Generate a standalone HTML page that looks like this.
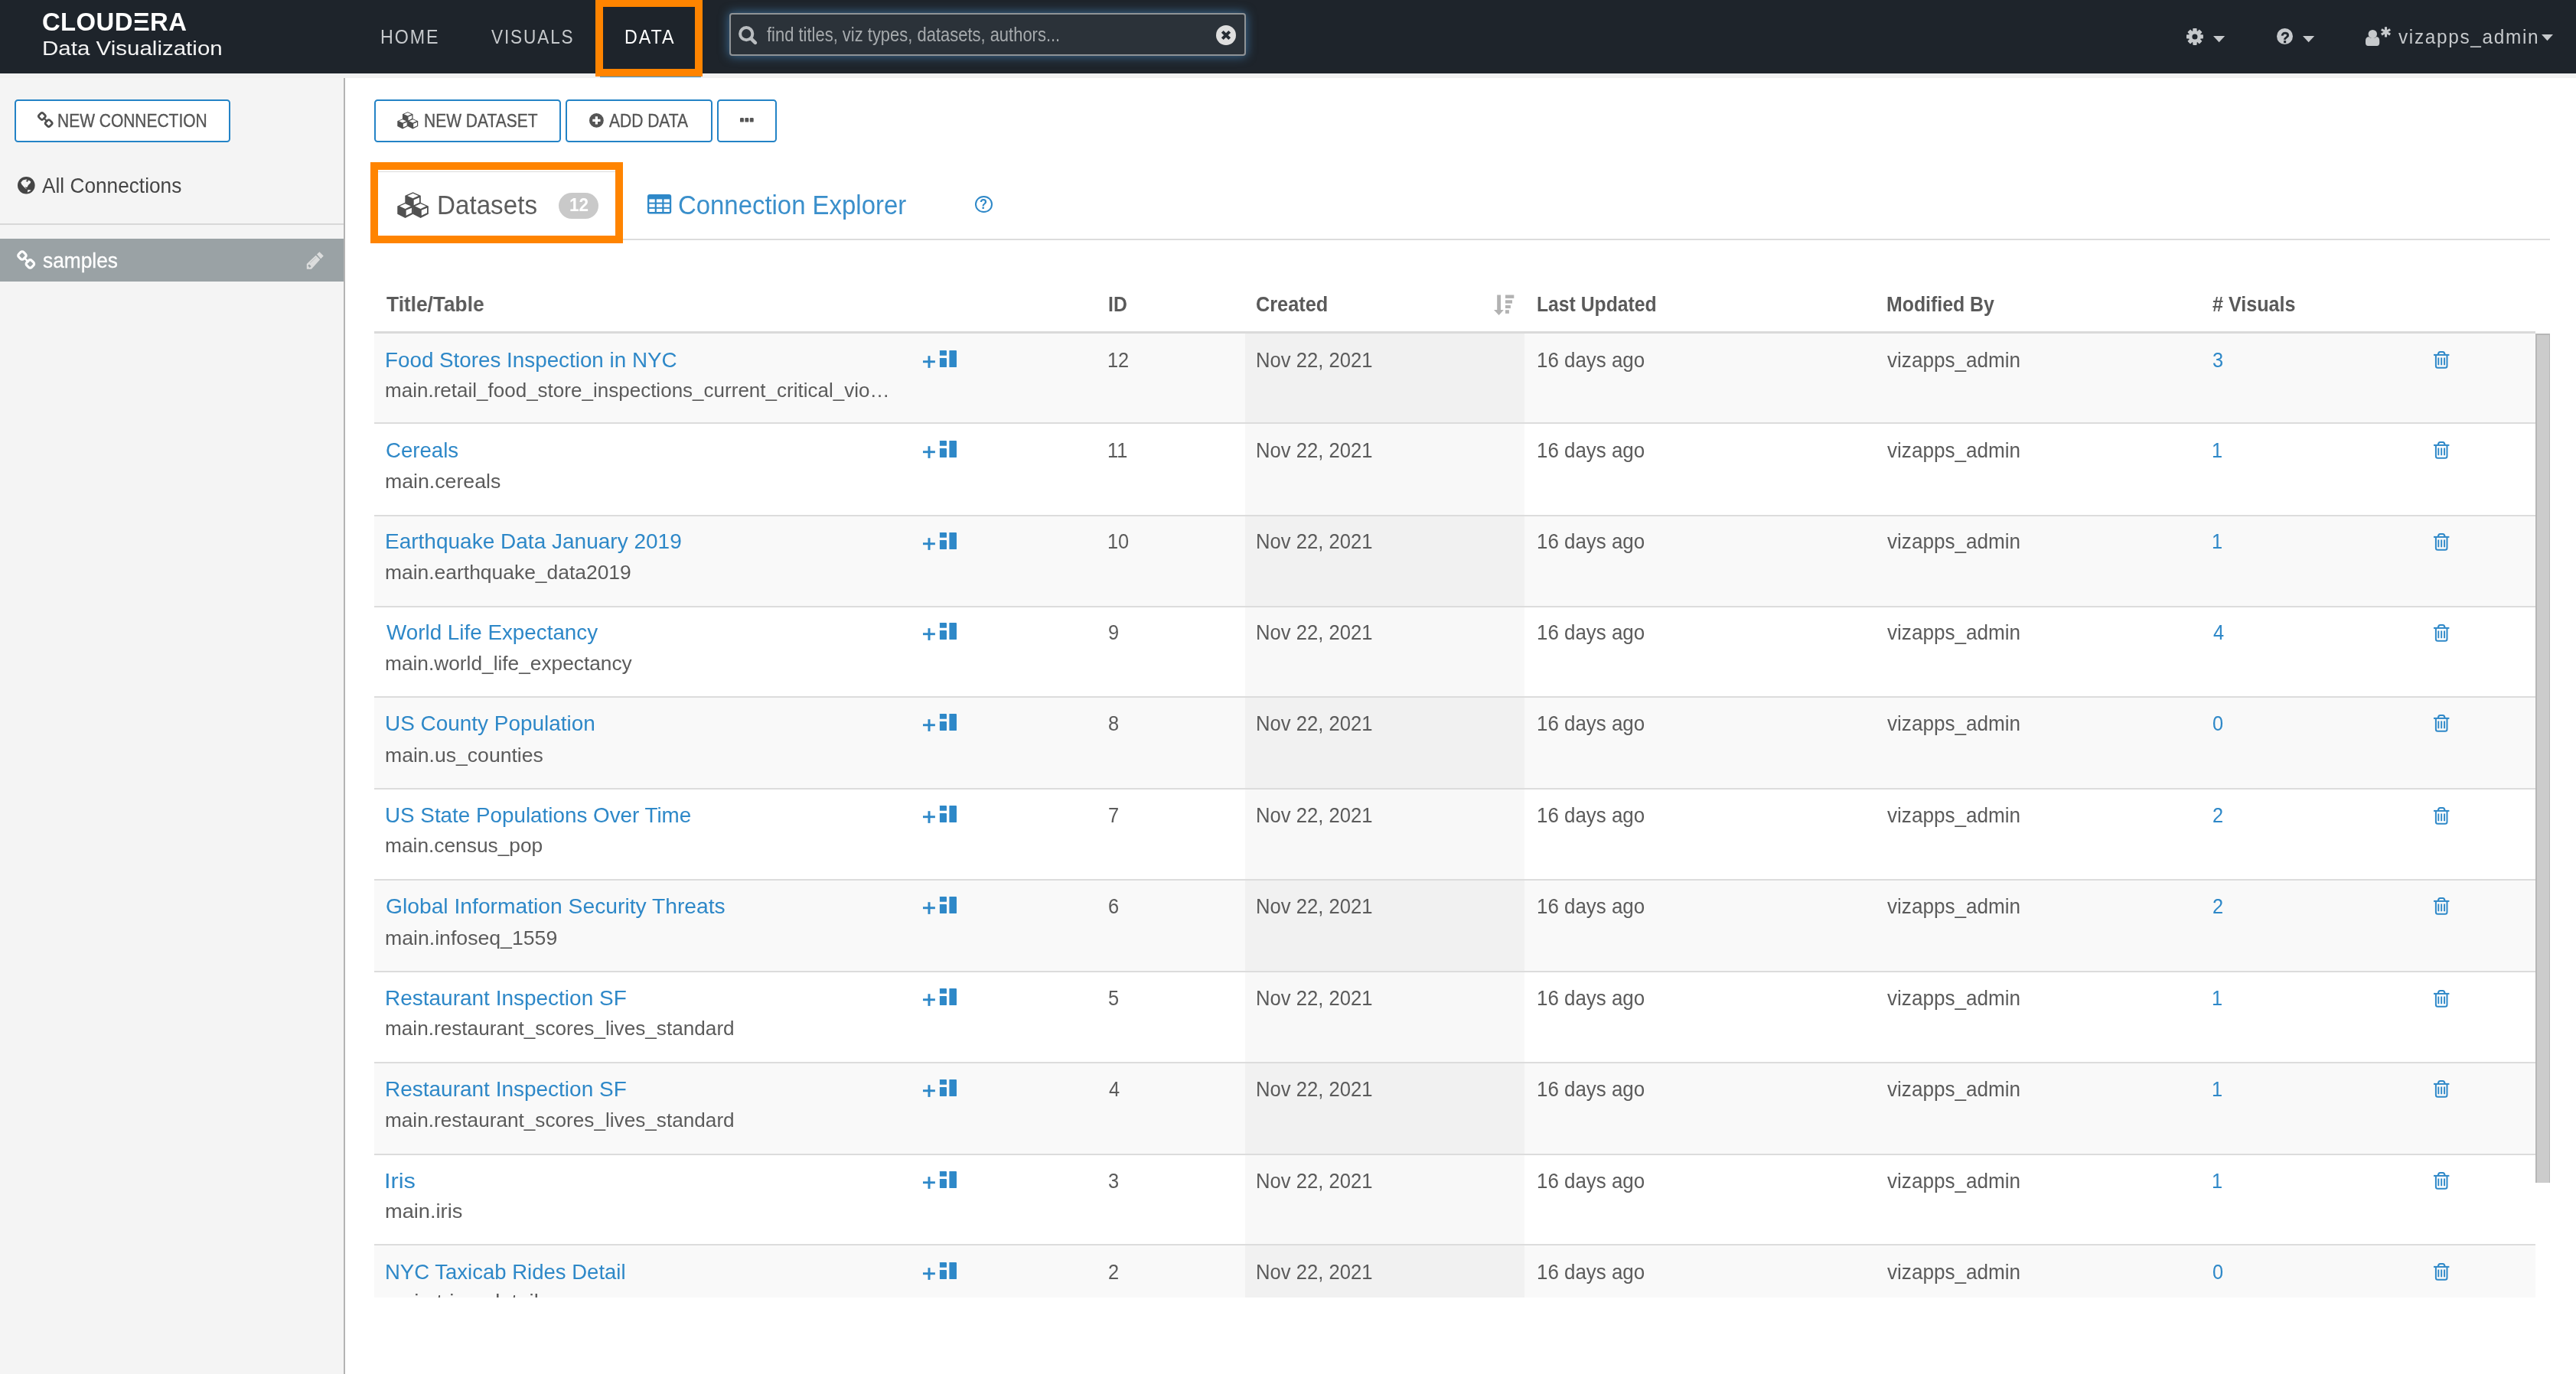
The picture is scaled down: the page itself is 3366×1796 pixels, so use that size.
<!DOCTYPE html>
<html lang="en">
<head>
<meta charset="utf-8">
<title>Cloudera Data Visualization - Data</title>
<style>
html,body{margin:0;padding:0}
body{position:relative;width:3366px;height:1796px;overflow:hidden;background:#fff;font-family:"Liberation Sans", sans-serif;color:#555555}
#page{position:absolute;left:0;top:0;width:3366px;height:1796px;overflow:hidden;will-change:transform}
.abs,.t,.i{position:absolute}
.t{white-space:nowrap;line-height:1;transform-origin:0 0;display:block}
.i{display:block;overflow:visible}
.hl{box-sizing:border-box;border:10px solid #ff8400}
.btn{box-sizing:border-box;border:2px solid #2383c6;border-radius:4.5px;background:#fff}
.search{box-sizing:border-box;border:2px solid #8f9396;border-radius:4px;background:#2b3239;box-shadow:0 0 13px 1px rgba(82,160,224,.55)}
.strip{left:0;top:95.5px;width:3366px;height:6.2px;background:#f1f1f1}
.tbody{position:absolute;overflow:hidden}
.row{position:absolute;left:0;width:100%;box-sizing:border-box;border-top:2px solid #dcdcdc}
.row.odd{background:#f9f9f9}
.row.even{background:#fff}
.sorted{position:absolute;left:1137.7px;top:0;width:365.8px;height:100%}
.row.odd .sorted{background:#f1f1f1}
.row.even .sorted{background:#f8f8f8}
</style>
</head>
<body>
<div id="page">
<div class="abs strip"></div>
<aside class="sidebar">
<div class="abs" style="left:0;top:101.6px;width:449.25px;height:1695px;background:#f4f4f4"></div>
<div class="abs" style="left:449.25px;top:101.6px;width:2px;height:1695px;background:#b3b3b3"></div>
<div class="abs btn" style="left:19px;top:130px;width:281.75px;height:55.75px"></div>
<svg class="i" style="left:49.1px;top:146.3px" width="20.6" height="21.11" viewBox="0 0 24.4 25"><g fill="none" stroke="#4f4f4f" stroke-width="3.2"><rect x="-4.5" y="-4.5" width="9" height="9" rx="2.8" transform="translate(6.95 7) rotate(45)"/><rect x="-4.5" y="-4.5" width="9" height="9" rx="2.8" transform="translate(17.4 17.9) rotate(45)"/></g><path d="M9 9.3l6.6 6.5" stroke="#4f4f4f" stroke-width="2.5" stroke-linecap="butt"/></svg>
<span class="t" style="left:75.29px;top:146.73px;font-size:23px;transform:scaleX(0.9116);-webkit-text-stroke:0.35px currentColor;">NEW CONNECTION</span>
<svg class="i" style="left:22.6px;top:231.2px" width="22.6" height="22.6" viewBox="0 0 22.6 22.6"><circle cx="11.3" cy="11.3" r="11.3" fill="#454545"/><path d="M4.3 7.4L6.9 4.6L11 3.4L12.9 3.9L10.7 5.4L12.9 6.9L13.8 5.2L14.7 4.6L17.3 6.4L16.5 8.5L13.9 11L12.7 13.4L11.6 14L10.1 13L10.4 14.5L12.3 16.2L10.6 15.5L7.4 12.5L5.1 9.7z" fill="#f4f4f4"/><path d="M13.4 17.1L17.5 17.4L16.3 18.8L12.8 20.6z" fill="#f4f4f4"/></svg>
<span class="t" style="left:55.3px;top:228.97px;font-size:27.2px;color:#454545;transform:scaleX(0.9649);">All Connections</span>
<div class="abs" style="left:0;top:292px;width:449.25px;height:1.5px;background:#d8d8d8"></div>
<div class="abs" style="left:0;top:312px;width:449.25px;height:56.25px;background:#9aa2a5"></div>
<svg class="i" style="left:21.6px;top:327.1px" width="24.4" height="25" viewBox="0 0 24.4 25"><g fill="none" stroke="#ffffff" stroke-width="3.2"><rect x="-4.5" y="-4.5" width="9" height="9" rx="2.8" transform="translate(6.95 7) rotate(45)"/><rect x="-4.5" y="-4.5" width="9" height="9" rx="2.8" transform="translate(17.4 17.9) rotate(45)"/></g><path d="M9 9.3l6.6 6.5" stroke="#ffffff" stroke-width="2.5" stroke-linecap="butt"/></svg>
<span class="t" style="left:55.8px;top:326.87px;font-size:27.2px;color:#fff;transform:scaleX(0.9678);-webkit-text-stroke:0.3px #fff;">samples</span>
<svg class="i" style="left:400px;top:329px" width="23" height="23" viewBox="0 0 23 23"><g fill="#dcdddd" stroke="#dcdddd" stroke-width="0.8" stroke-linejoin="round"><path d="M14.4 3.4L17.4 0.7L22.3 5.5L19.2 8.9z"/></g><path d="M0.8 16L12.7 4.7L18.2 10.2L6.9 22.7H0.8z" fill="#dcdddd"/><path d="M2.6 18L4 16.4L6.6 19L5 20.7L3.8 20.5L3.7 19.3L2.6 19.2z" fill="#9aa2a5"/><path d="M5.2 14.6L13.2 7.4" stroke="#9aa2a5" stroke-width="0.7" opacity="0.65"/></svg>
</aside>
<main>
<section class="toolbar">
<div class="abs btn" style="left:489.25px;top:130px;width:243.75px;height:55.75px"></div>
<svg class="i" style="left:518.8px;top:146.3px" width="27.5" height="22.6" viewBox="0 0 41 34.2"><path d="M20.5 0.2l10.3 4.7v10.3l-10.3 5.2l-10.3-5.2v-10.3z" fill="#505050"/><path d="M20.5 1.75l7.3 3.25l-7.3 3.35l-7.3-3.35z" fill="#fff"/><path d="M21.65 10.3l7.3-3.1v6.6l-7.3 3.55z" fill="#fff"/><path d="M10.4 13.9l10.3 4.7v10.3l-10.3 5.2l-10.3-5.2v-10.3z" fill="#505050"/><path d="M10.4 15.45l7.3 3.25l-7.3 3.35l-7.3-3.35z" fill="#fff"/><path d="M11.55 24l7.3-3.1v6.6l-7.3 3.55z" fill="#fff"/><path d="M30.6 13.9l10.3 4.7v10.3l-10.3 5.2l-10.3-5.2v-10.3z" fill="#505050"/><path d="M30.6 15.45l7.3 3.25l-7.3 3.35l-7.3-3.35z" fill="#fff"/><path d="M31.75 24l7.3-3.1v6.6l-7.3 3.55z" fill="#fff"/></svg>
<span class="t" style="left:553.59px;top:146.73px;font-size:23px;transform:scaleX(0.9124);-webkit-text-stroke:0.35px currentColor;">NEW DATASET</span>
<div class="abs btn" style="left:739.25px;top:130px;width:191.25px;height:55.75px"></div>
<svg class="i" style="left:770.2px;top:148.2px" width="18.8" height="18.8" viewBox="0 0 18.8 18.8"><circle cx="9.4" cy="9.4" r="9.4" fill="#555555"/><path d="M9.4 4.3v10.2M4.3 9.4h10.2" stroke="#fff" stroke-width="3.2"/></svg>
<span class="t" style="left:795.8px;top:146.73px;font-size:23px;transform:scaleX(0.9134);-webkit-text-stroke:0.35px currentColor;">ADD DATA</span>
<div class="abs btn" style="left:936.5px;top:130px;width:78.75px;height:55.75px"></div>
<svg class="i" style="left:966.8px;top:153.8px" width="17.7" height="5.6" viewBox="0 0 17.7 5.6"><rect x="0" y="0" width="4.9" height="5.6" rx="1.2" fill="#555555"/><rect x="6.4" y="0" width="4.9" height="5.6" rx="1.2" fill="#555555"/><rect x="12.8" y="0" width="4.9" height="5.6" rx="1.2" fill="#555555"/></svg>
</section>
<section class="tabs">
<div class="abs" style="left:489px;top:312.2px;width:2843px;height:1.8px;background:#dcdcdc"></div>
<div class="abs" style="left:490px;top:223.6px;width:320px;height:90.5px;background:#fff;border:1.8px solid #dcdcdc;border-bottom:none;border-radius:4px 4px 0 0"></div>
<div class="abs hl" style="left:484px;top:212px;width:329.75px;height:105.5px"></div>
<svg class="i" style="left:518.9px;top:251px" width="41.1" height="34" viewBox="0 0 41 34.2"><path d="M20.5 0.2l10.3 4.7v10.3l-10.3 5.2l-10.3-5.2v-10.3z" fill="#515151"/><path d="M20.5 1.75l7.3 3.25l-7.3 3.35l-7.3-3.35z" fill="#fff"/><path d="M21.65 10.3l7.3-3.1v6.6l-7.3 3.55z" fill="#fff"/><path d="M10.4 13.9l10.3 4.7v10.3l-10.3 5.2l-10.3-5.2v-10.3z" fill="#515151"/><path d="M10.4 15.45l7.3 3.25l-7.3 3.35l-7.3-3.35z" fill="#fff"/><path d="M11.55 24l7.3-3.1v6.6l-7.3 3.55z" fill="#fff"/><path d="M30.6 13.9l10.3 4.7v10.3l-10.3 5.2l-10.3-5.2v-10.3z" fill="#515151"/><path d="M30.6 15.45l7.3 3.25l-7.3 3.35l-7.3-3.35z" fill="#fff"/><path d="M31.75 24l7.3-3.1v6.6l-7.3 3.55z" fill="#fff"/></svg>
<span class="t" style="left:571.26px;top:251.04px;font-size:34.2px;color:#5c5c5c;transform:scaleX(0.971);">Datasets</span>
<div class="abs" style="left:729.6px;top:252px;width:52.4px;height:33.7px;border-radius:17px;background:#c9c9c9"></div>
<span class="t" style="left:743.68px;top:256.34px;font-size:24.4px;font-weight:700;color:#fff;transform:scaleX(0.9231);">12</span>
<svg class="i" style="left:846px;top:254px" width="31.2" height="25.5" viewBox="0 0 31.2 25.5"><rect x="0" y="0" width="31.2" height="25.5" rx="3" fill="#2e88c8"/><rect x="2.3" y="6.4" width="7.4" height="4.2" fill="#fff"/><rect x="2.3" y="12.6" width="7.4" height="4.2" fill="#fff"/><rect x="2.3" y="18.8" width="7.4" height="4.2" fill="#fff"/><rect x="11.9" y="6.4" width="7.4" height="4.2" fill="#fff"/><rect x="11.9" y="12.6" width="7.4" height="4.2" fill="#fff"/><rect x="11.9" y="18.8" width="7.4" height="4.2" fill="#fff"/><rect x="21.5" y="6.4" width="7.4" height="4.2" fill="#fff"/><rect x="21.5" y="12.6" width="7.4" height="4.2" fill="#fff"/><rect x="21.5" y="18.8" width="7.4" height="4.2" fill="#fff"/></svg>
<span class="t" style="left:886.24px;top:250.64px;font-size:34.2px;color:#3a8fcb;transform:scaleX(0.9625);">Connection Explorer</span>
<div class="abs" style="left:1274px;top:256.1px;width:22.6px;height:21.6px;border-radius:50%;border:2.2px solid #2e88c8;box-sizing:border-box"></div>
<span class="t" style="left:1280.4px;top:257.94px;font-size:18.5px;font-weight:700;color:#2e88c8;transform:scaleX(0.8909);">?</span>
</section>
<section class="datasets">
<div class="thead">
<span class="t" style="left:504.6px;top:385.31px;font-size:26.8px;font-weight:700;color:#5a5a5a;transform:scaleX(0.9803);">Title/Table</span>
<span class="t" style="left:1447.98px;top:385.31px;font-size:26.8px;font-weight:700;color:#5a5a5a;transform:scaleX(0.9236);">ID</span>
<span class="t" style="left:1641.16px;top:385.31px;font-size:26.8px;font-weight:700;color:#5a5a5a;transform:scaleX(0.9444);">Created</span>
<svg class="i" style="left:1952px;top:385px" width="27" height="28" viewBox="0 0 27 28"><g fill="#b2b2b2"><path d="M4.2 0.5h4.8v19.4h3.9l-6.3 7.2-6.6-7.2h4.2z"/><rect x="15" y="0.5" width="11.3" height="4.4"/><rect x="15" y="7.3" width="9" height="4.3"/><rect x="15" y="13.9" width="6.9" height="4.1"/><rect x="15" y="20.2" width="4.9" height="4.6"/></g></svg>
<span class="t" style="left:2008.48px;top:385.31px;font-size:26.8px;font-weight:700;color:#5a5a5a;transform:scaleX(0.9225);">Last Updated</span>
<span class="t" style="left:2465.37px;top:385.31px;font-size:26.8px;font-weight:700;color:#5a5a5a;transform:scaleX(0.9275);">Modified By</span>
<span class="t" style="left:2891.3px;top:385.31px;font-size:26.8px;font-weight:700;color:#5a5a5a;transform:scaleX(0.9381);"># Visuals</span>
<div class="abs" style="left:489px;top:433px;width:2824.3px;height:3px;background:#dadada"></div>
</div>
<div class="tbody" style="left:489px;top:436px;width:2824.3px;height:1259.6px">
<div class="row odd" style="top:-3px;height:119px">
<div class="sorted"></div>
<span class="t" style="left:13.56px;top:21.59px;font-size:27.3px;color:#2e88c8;transform:scaleX(1.0182);">Food Stores Inspection in NYC</span>
<span class="t" style="left:14.38px;top:62.59px;font-size:25.4px;color:#5b5b5b;transform:scaleX(1.0248);">main.retail_food_store_inspections_current_critical_vio…</span>
<svg class="i" style="left:717.2px;top:22.7px" width="45" height="23.2" viewBox="0 0 45 23.2"><g fill="#2e88c8"><rect x="0" y="13.3" width="15.9" height="2.9"/><rect x="6.5" y="7.2" width="3" height="15.7"/><rect x="21.9" y="0" width="9.1" height="6.8" rx="0.5"/><rect x="21.9" y="9.9" width="9.1" height="12.1" rx="0.5"/><rect x="34.4" y="0" width="9.6" height="22" rx="0.5"/></g></svg>
<span class="t" style="left:958.44px;top:21.59px;font-size:27.3px;color:#5b5b5b;transform:scaleX(0.93);">12</span>
<span class="t" style="left:1151.72px;top:21.59px;font-size:27.3px;color:#5b5b5b;transform:scaleX(0.9384);">Nov 22, 2021</span>
<span class="t" style="left:1519.3px;top:21.59px;font-size:27.3px;color:#5b5b5b;transform:scaleX(0.9492);">16 days ago</span>
<span class="t" style="left:1976.8px;top:21.59px;font-size:27.3px;color:#5b5b5b;transform:scaleX(0.9563);">vizapps_admin</span>
<span class="t" style="left:2401.57px;top:21.59px;font-size:27.3px;color:#2e88c8;transform:scaleX(0.93);">3</span>
<svg class="i" style="left:2690.9px;top:24px" width="20.4" height="22.8" viewBox="0 0 20.4 22.8"><g fill="none" stroke="#2e88c8" stroke-width="2"><path d="M0 4.9h20.4"/><path d="M5.8 4.4c.300-2.3 1.2-3.4 2.7-3.4h3.4c1.5 0 2.4 1.1 2.7 3.4"/><path d="M2.9 5.2v14.1c0 1.5 1 2.5 2.5 2.5h9.6c1.5 0 2.5-1 2.5-2.5V5.2"/><path d="M6.3 8.4v9.8M10.2 8.4v9.8M14.1 8.4v9.8" stroke-width="1.9"/></g></svg>
</div>
<div class="row even" style="top:116px;height:121px">
<div class="sorted"></div>
<span class="t" style="left:14.59px;top:20.69px;font-size:27.3px;color:#2e88c8;transform:scaleX(1.0118);">Cereals</span>
<span class="t" style="left:14.35px;top:63.49px;font-size:25.4px;color:#5b5b5b;transform:scaleX(1.051);">main.cereals</span>
<svg class="i" style="left:717.2px;top:21.8px" width="45" height="23.2" viewBox="0 0 45 23.2"><g fill="#2e88c8"><rect x="0" y="13.3" width="15.9" height="2.9"/><rect x="6.5" y="7.2" width="3" height="15.7"/><rect x="21.9" y="0" width="9.1" height="6.8" rx="0.5"/><rect x="21.9" y="9.9" width="9.1" height="12.1" rx="0.5"/><rect x="34.4" y="0" width="9.6" height="22" rx="0.5"/></g></svg>
<span class="t" style="left:958.44px;top:20.69px;font-size:27.3px;color:#5b5b5b;transform:scaleX(0.93);">11</span>
<span class="t" style="left:1151.72px;top:20.69px;font-size:27.3px;color:#5b5b5b;transform:scaleX(0.9384);">Nov 22, 2021</span>
<span class="t" style="left:1519.3px;top:20.69px;font-size:27.3px;color:#5b5b5b;transform:scaleX(0.9492);">16 days ago</span>
<span class="t" style="left:1976.8px;top:20.69px;font-size:27.3px;color:#5b5b5b;transform:scaleX(0.9563);">vizapps_admin</span>
<span class="t" style="left:2400.64px;top:20.69px;font-size:27.3px;color:#2e88c8;transform:scaleX(0.93);">1</span>
<svg class="i" style="left:2690.9px;top:23.1px" width="20.4" height="22.8" viewBox="0 0 20.4 22.8"><g fill="none" stroke="#2e88c8" stroke-width="2"><path d="M0 4.9h20.4"/><path d="M5.8 4.4c.300-2.3 1.2-3.4 2.7-3.4h3.4c1.5 0 2.4 1.1 2.7 3.4"/><path d="M2.9 5.2v14.1c0 1.5 1 2.5 2.5 2.5h9.6c1.5 0 2.5-1 2.5-2.5V5.2"/><path d="M6.3 8.4v9.8M10.2 8.4v9.8M14.1 8.4v9.8" stroke-width="1.9"/></g></svg>
</div>
<div class="row odd" style="top:237px;height:119px">
<div class="sorted"></div>
<span class="t" style="left:13.55px;top:19.49px;font-size:27.3px;color:#2e88c8;transform:scaleX(1.0262);">Earthquake Data January 2019</span>
<span class="t" style="left:14.36px;top:60.99px;font-size:25.4px;color:#5b5b5b;transform:scaleX(1.0406);">main.earthquake_data2019</span>
<svg class="i" style="left:717.2px;top:20.6px" width="45" height="23.2" viewBox="0 0 45 23.2"><g fill="#2e88c8"><rect x="0" y="13.3" width="15.9" height="2.9"/><rect x="6.5" y="7.2" width="3" height="15.7"/><rect x="21.9" y="0" width="9.1" height="6.8" rx="0.5"/><rect x="21.9" y="9.9" width="9.1" height="12.1" rx="0.5"/><rect x="34.4" y="0" width="9.6" height="22" rx="0.5"/></g></svg>
<span class="t" style="left:958.44px;top:19.49px;font-size:27.3px;color:#5b5b5b;transform:scaleX(0.93);">10</span>
<span class="t" style="left:1151.72px;top:19.49px;font-size:27.3px;color:#5b5b5b;transform:scaleX(0.9384);">Nov 22, 2021</span>
<span class="t" style="left:1519.3px;top:19.49px;font-size:27.3px;color:#5b5b5b;transform:scaleX(0.9492);">16 days ago</span>
<span class="t" style="left:1976.8px;top:19.49px;font-size:27.3px;color:#5b5b5b;transform:scaleX(0.9563);">vizapps_admin</span>
<span class="t" style="left:2400.64px;top:19.49px;font-size:27.3px;color:#2e88c8;transform:scaleX(0.93);">1</span>
<svg class="i" style="left:2690.9px;top:21.9px" width="20.4" height="22.8" viewBox="0 0 20.4 22.8"><g fill="none" stroke="#2e88c8" stroke-width="2"><path d="M0 4.9h20.4"/><path d="M5.8 4.4c.300-2.3 1.2-3.4 2.7-3.4h3.4c1.5 0 2.4 1.1 2.7 3.4"/><path d="M2.9 5.2v14.1c0 1.5 1 2.5 2.5 2.5h9.6c1.5 0 2.5-1 2.5-2.5V5.2"/><path d="M6.3 8.4v9.8M10.2 8.4v9.8M14.1 8.4v9.8" stroke-width="1.9"/></g></svg>
</div>
<div class="row even" style="top:356px;height:118px">
<div class="sorted"></div>
<span class="t" style="left:15.6px;top:19.29px;font-size:27.3px;color:#2e88c8;transform:scaleX(1.0187);">World Life Expectancy</span>
<span class="t" style="left:14.37px;top:60.89px;font-size:25.4px;color:#5b5b5b;transform:scaleX(1.0347);">main.world_life_expectancy</span>
<svg class="i" style="left:717.2px;top:20.4px" width="45" height="23.2" viewBox="0 0 45 23.2"><g fill="#2e88c8"><rect x="0" y="13.3" width="15.9" height="2.9"/><rect x="6.5" y="7.2" width="3" height="15.7"/><rect x="21.9" y="0" width="9.1" height="6.8" rx="0.5"/><rect x="21.9" y="9.9" width="9.1" height="12.1" rx="0.5"/><rect x="34.4" y="0" width="9.6" height="22" rx="0.5"/></g></svg>
<span class="t" style="left:959.37px;top:19.29px;font-size:27.3px;color:#5b5b5b;transform:scaleX(0.93);">9</span>
<span class="t" style="left:1151.72px;top:19.29px;font-size:27.3px;color:#5b5b5b;transform:scaleX(0.9384);">Nov 22, 2021</span>
<span class="t" style="left:1519.3px;top:19.29px;font-size:27.3px;color:#5b5b5b;transform:scaleX(0.9492);">16 days ago</span>
<span class="t" style="left:1976.8px;top:19.29px;font-size:27.3px;color:#5b5b5b;transform:scaleX(0.9563);">vizapps_admin</span>
<span class="t" style="left:2402.5px;top:19.29px;font-size:27.3px;color:#2e88c8;transform:scaleX(0.93);">4</span>
<svg class="i" style="left:2690.9px;top:21.7px" width="20.4" height="22.8" viewBox="0 0 20.4 22.8"><g fill="none" stroke="#2e88c8" stroke-width="2"><path d="M0 4.9h20.4"/><path d="M5.8 4.4c.300-2.3 1.2-3.4 2.7-3.4h3.4c1.5 0 2.4 1.1 2.7 3.4"/><path d="M2.9 5.2v14.1c0 1.5 1 2.5 2.5 2.5h9.6c1.5 0 2.5-1 2.5-2.5V5.2"/><path d="M6.3 8.4v9.8M10.2 8.4v9.8M14.1 8.4v9.8" stroke-width="1.9"/></g></svg>
</div>
<div class="row odd" style="top:474px;height:120px">
<div class="sorted"></div>
<span class="t" style="left:13.55px;top:19.89px;font-size:27.3px;color:#2e88c8;transform:scaleX(1.023);">US County Population</span>
<span class="t" style="left:14.35px;top:63.19px;font-size:25.4px;color:#5b5b5b;transform:scaleX(1.0465);">main.us_counties</span>
<svg class="i" style="left:717.2px;top:21px" width="45" height="23.2" viewBox="0 0 45 23.2"><g fill="#2e88c8"><rect x="0" y="13.3" width="15.9" height="2.9"/><rect x="6.5" y="7.2" width="3" height="15.7"/><rect x="21.9" y="0" width="9.1" height="6.8" rx="0.5"/><rect x="21.9" y="9.9" width="9.1" height="12.1" rx="0.5"/><rect x="34.4" y="0" width="9.6" height="22" rx="0.5"/></g></svg>
<span class="t" style="left:959.37px;top:19.89px;font-size:27.3px;color:#5b5b5b;transform:scaleX(0.93);">8</span>
<span class="t" style="left:1151.72px;top:19.89px;font-size:27.3px;color:#5b5b5b;transform:scaleX(0.9384);">Nov 22, 2021</span>
<span class="t" style="left:1519.3px;top:19.89px;font-size:27.3px;color:#5b5b5b;transform:scaleX(0.9492);">16 days ago</span>
<span class="t" style="left:1976.8px;top:19.89px;font-size:27.3px;color:#5b5b5b;transform:scaleX(0.9563);">vizapps_admin</span>
<span class="t" style="left:2401.57px;top:19.89px;font-size:27.3px;color:#2e88c8;transform:scaleX(0.93);">0</span>
<svg class="i" style="left:2690.9px;top:22.3px" width="20.4" height="22.8" viewBox="0 0 20.4 22.8"><g fill="none" stroke="#2e88c8" stroke-width="2"><path d="M0 4.9h20.4"/><path d="M5.8 4.4c.300-2.3 1.2-3.4 2.7-3.4h3.4c1.5 0 2.4 1.1 2.7 3.4"/><path d="M2.9 5.2v14.1c0 1.5 1 2.5 2.5 2.5h9.6c1.5 0 2.5-1 2.5-2.5V5.2"/><path d="M6.3 8.4v9.8M10.2 8.4v9.8M14.1 8.4v9.8" stroke-width="1.9"/></g></svg>
</div>
<div class="row even" style="top:594px;height:119px">
<div class="sorted"></div>
<span class="t" style="left:13.56px;top:20.19px;font-size:27.3px;color:#2e88c8;transform:scaleX(1.0185);">US State Populations Over Time</span>
<span class="t" style="left:14.36px;top:61.19px;font-size:25.4px;color:#5b5b5b;transform:scaleX(1.0359);">main.census_pop</span>
<svg class="i" style="left:717.2px;top:21.3px" width="45" height="23.2" viewBox="0 0 45 23.2"><g fill="#2e88c8"><rect x="0" y="13.3" width="15.9" height="2.9"/><rect x="6.5" y="7.2" width="3" height="15.7"/><rect x="21.9" y="0" width="9.1" height="6.8" rx="0.5"/><rect x="21.9" y="9.9" width="9.1" height="12.1" rx="0.5"/><rect x="34.4" y="0" width="9.6" height="22" rx="0.5"/></g></svg>
<span class="t" style="left:959.37px;top:20.19px;font-size:27.3px;color:#5b5b5b;transform:scaleX(0.93);">7</span>
<span class="t" style="left:1151.72px;top:20.19px;font-size:27.3px;color:#5b5b5b;transform:scaleX(0.9384);">Nov 22, 2021</span>
<span class="t" style="left:1519.3px;top:20.19px;font-size:27.3px;color:#5b5b5b;transform:scaleX(0.9492);">16 days ago</span>
<span class="t" style="left:1976.8px;top:20.19px;font-size:27.3px;color:#5b5b5b;transform:scaleX(0.9563);">vizapps_admin</span>
<span class="t" style="left:2401.57px;top:20.19px;font-size:27.3px;color:#2e88c8;transform:scaleX(0.93);">2</span>
<svg class="i" style="left:2690.9px;top:22.6px" width="20.4" height="22.8" viewBox="0 0 20.4 22.8"><g fill="none" stroke="#2e88c8" stroke-width="2"><path d="M0 4.9h20.4"/><path d="M5.8 4.4c.300-2.3 1.2-3.4 2.7-3.4h3.4c1.5 0 2.4 1.1 2.7 3.4"/><path d="M2.9 5.2v14.1c0 1.5 1 2.5 2.5 2.5h9.6c1.5 0 2.5-1 2.5-2.5V5.2"/><path d="M6.3 8.4v9.8M10.2 8.4v9.8M14.1 8.4v9.8" stroke-width="1.9"/></g></svg>
</div>
<div class="row odd" style="top:713px;height:120px">
<div class="sorted"></div>
<span class="t" style="left:14.57px;top:19.79px;font-size:27.3px;color:#2e88c8;transform:scaleX(1.0346);">Global Information Security Threats</span>
<span class="t" style="left:14.35px;top:63.09px;font-size:25.4px;color:#5b5b5b;transform:scaleX(1.0497);">main.infoseq_1559</span>
<svg class="i" style="left:717.2px;top:20.9px" width="45" height="23.2" viewBox="0 0 45 23.2"><g fill="#2e88c8"><rect x="0" y="13.3" width="15.9" height="2.9"/><rect x="6.5" y="7.2" width="3" height="15.7"/><rect x="21.9" y="0" width="9.1" height="6.8" rx="0.5"/><rect x="21.9" y="9.9" width="9.1" height="12.1" rx="0.5"/><rect x="34.4" y="0" width="9.6" height="22" rx="0.5"/></g></svg>
<span class="t" style="left:959.37px;top:19.79px;font-size:27.3px;color:#5b5b5b;transform:scaleX(0.93);">6</span>
<span class="t" style="left:1151.72px;top:19.79px;font-size:27.3px;color:#5b5b5b;transform:scaleX(0.9384);">Nov 22, 2021</span>
<span class="t" style="left:1519.3px;top:19.79px;font-size:27.3px;color:#5b5b5b;transform:scaleX(0.9492);">16 days ago</span>
<span class="t" style="left:1976.8px;top:19.79px;font-size:27.3px;color:#5b5b5b;transform:scaleX(0.9563);">vizapps_admin</span>
<span class="t" style="left:2401.57px;top:19.79px;font-size:27.3px;color:#2e88c8;transform:scaleX(0.93);">2</span>
<svg class="i" style="left:2690.9px;top:22.2px" width="20.4" height="22.8" viewBox="0 0 20.4 22.8"><g fill="none" stroke="#2e88c8" stroke-width="2"><path d="M0 4.9h20.4"/><path d="M5.8 4.4c.300-2.3 1.2-3.4 2.7-3.4h3.4c1.5 0 2.4 1.1 2.7 3.4"/><path d="M2.9 5.2v14.1c0 1.5 1 2.5 2.5 2.5h9.6c1.5 0 2.5-1 2.5-2.5V5.2"/><path d="M6.3 8.4v9.8M10.2 8.4v9.8M14.1 8.4v9.8" stroke-width="1.9"/></g></svg>
</div>
<div class="row even" style="top:833px;height:119px">
<div class="sorted"></div>
<span class="t" style="left:13.55px;top:20.09px;font-size:27.3px;color:#2e88c8;transform:scaleX(1.0251);">Restaurant Inspection SF</span>
<span class="t" style="left:14.37px;top:61.19px;font-size:25.4px;color:#5b5b5b;transform:scaleX(1.0305);">main.restaurant_scores_lives_standard</span>
<svg class="i" style="left:717.2px;top:21.2px" width="45" height="23.2" viewBox="0 0 45 23.2"><g fill="#2e88c8"><rect x="0" y="13.3" width="15.9" height="2.9"/><rect x="6.5" y="7.2" width="3" height="15.7"/><rect x="21.9" y="0" width="9.1" height="6.8" rx="0.5"/><rect x="21.9" y="9.9" width="9.1" height="12.1" rx="0.5"/><rect x="34.4" y="0" width="9.6" height="22" rx="0.5"/></g></svg>
<span class="t" style="left:959.37px;top:20.09px;font-size:27.3px;color:#5b5b5b;transform:scaleX(0.93);">5</span>
<span class="t" style="left:1151.72px;top:20.09px;font-size:27.3px;color:#5b5b5b;transform:scaleX(0.9384);">Nov 22, 2021</span>
<span class="t" style="left:1519.3px;top:20.09px;font-size:27.3px;color:#5b5b5b;transform:scaleX(0.9492);">16 days ago</span>
<span class="t" style="left:1976.8px;top:20.09px;font-size:27.3px;color:#5b5b5b;transform:scaleX(0.9563);">vizapps_admin</span>
<span class="t" style="left:2400.64px;top:20.09px;font-size:27.3px;color:#2e88c8;transform:scaleX(0.93);">1</span>
<svg class="i" style="left:2690.9px;top:22.5px" width="20.4" height="22.8" viewBox="0 0 20.4 22.8"><g fill="none" stroke="#2e88c8" stroke-width="2"><path d="M0 4.9h20.4"/><path d="M5.8 4.4c.300-2.3 1.2-3.4 2.7-3.4h3.4c1.5 0 2.4 1.1 2.7 3.4"/><path d="M2.9 5.2v14.1c0 1.5 1 2.5 2.5 2.5h9.6c1.5 0 2.5-1 2.5-2.5V5.2"/><path d="M6.3 8.4v9.8M10.2 8.4v9.8M14.1 8.4v9.8" stroke-width="1.9"/></g></svg>
</div>
<div class="row odd" style="top:952px;height:120px">
<div class="sorted"></div>
<span class="t" style="left:13.55px;top:19.69px;font-size:27.3px;color:#2e88c8;transform:scaleX(1.0251);">Restaurant Inspection SF</span>
<span class="t" style="left:14.37px;top:62.19px;font-size:25.4px;color:#5b5b5b;transform:scaleX(1.0305);">main.restaurant_scores_lives_standard</span>
<svg class="i" style="left:717.2px;top:20.8px" width="45" height="23.2" viewBox="0 0 45 23.2"><g fill="#2e88c8"><rect x="0" y="13.3" width="15.9" height="2.9"/><rect x="6.5" y="7.2" width="3" height="15.7"/><rect x="21.9" y="0" width="9.1" height="6.8" rx="0.5"/><rect x="21.9" y="9.9" width="9.1" height="12.1" rx="0.5"/><rect x="34.4" y="0" width="9.6" height="22" rx="0.5"/></g></svg>
<span class="t" style="left:960.3px;top:19.69px;font-size:27.3px;color:#5b5b5b;transform:scaleX(0.93);">4</span>
<span class="t" style="left:1151.72px;top:19.69px;font-size:27.3px;color:#5b5b5b;transform:scaleX(0.9384);">Nov 22, 2021</span>
<span class="t" style="left:1519.3px;top:19.69px;font-size:27.3px;color:#5b5b5b;transform:scaleX(0.9492);">16 days ago</span>
<span class="t" style="left:1976.8px;top:19.69px;font-size:27.3px;color:#5b5b5b;transform:scaleX(0.9563);">vizapps_admin</span>
<span class="t" style="left:2400.64px;top:19.69px;font-size:27.3px;color:#2e88c8;transform:scaleX(0.93);">1</span>
<svg class="i" style="left:2690.9px;top:22.1px" width="20.4" height="22.8" viewBox="0 0 20.4 22.8"><g fill="none" stroke="#2e88c8" stroke-width="2"><path d="M0 4.9h20.4"/><path d="M5.8 4.4c.300-2.3 1.2-3.4 2.7-3.4h3.4c1.5 0 2.4 1.1 2.7 3.4"/><path d="M2.9 5.2v14.1c0 1.5 1 2.5 2.5 2.5h9.6c1.5 0 2.5-1 2.5-2.5V5.2"/><path d="M6.3 8.4v9.8M10.2 8.4v9.8M14.1 8.4v9.8" stroke-width="1.9"/></g></svg>
</div>
<div class="row even" style="top:1072px;height:118px">
<div class="sorted"></div>
<span class="t" style="left:13.35px;top:19.69px;font-size:27.3px;color:#2e88c8;transform:scaleX(1.1263);">Iris</span>
<span class="t" style="left:14.33px;top:60.79px;font-size:25.4px;color:#5b5b5b;transform:scaleX(1.0719);">main.iris</span>
<svg class="i" style="left:717.2px;top:20.8px" width="45" height="23.2" viewBox="0 0 45 23.2"><g fill="#2e88c8"><rect x="0" y="13.3" width="15.9" height="2.9"/><rect x="6.5" y="7.2" width="3" height="15.7"/><rect x="21.9" y="0" width="9.1" height="6.8" rx="0.5"/><rect x="21.9" y="9.9" width="9.1" height="12.1" rx="0.5"/><rect x="34.4" y="0" width="9.6" height="22" rx="0.5"/></g></svg>
<span class="t" style="left:959.37px;top:19.69px;font-size:27.3px;color:#5b5b5b;transform:scaleX(0.93);">3</span>
<span class="t" style="left:1151.72px;top:19.69px;font-size:27.3px;color:#5b5b5b;transform:scaleX(0.9384);">Nov 22, 2021</span>
<span class="t" style="left:1519.3px;top:19.69px;font-size:27.3px;color:#5b5b5b;transform:scaleX(0.9492);">16 days ago</span>
<span class="t" style="left:1976.8px;top:19.69px;font-size:27.3px;color:#5b5b5b;transform:scaleX(0.9563);">vizapps_admin</span>
<span class="t" style="left:2400.64px;top:19.69px;font-size:27.3px;color:#2e88c8;transform:scaleX(0.93);">1</span>
<svg class="i" style="left:2690.9px;top:22.1px" width="20.4" height="22.8" viewBox="0 0 20.4 22.8"><g fill="none" stroke="#2e88c8" stroke-width="2"><path d="M0 4.9h20.4"/><path d="M5.8 4.4c.300-2.3 1.2-3.4 2.7-3.4h3.4c1.5 0 2.4 1.1 2.7 3.4"/><path d="M2.9 5.2v14.1c0 1.5 1 2.5 2.5 2.5h9.6c1.5 0 2.5-1 2.5-2.5V5.2"/><path d="M6.3 8.4v9.8M10.2 8.4v9.8M14.1 8.4v9.8" stroke-width="1.9"/></g></svg>
</div>
<div class="row odd" style="top:1190px;height:120px">
<div class="sorted"></div>
<span class="t" style="left:13.58px;top:20.59px;font-size:27.3px;color:#2e88c8;transform:scaleX(1.0082);">NYC Taxicab Rides Detail</span>
<span class="t" style="left:14.31px;top:61.29px;font-size:25.4px;color:#5b5b5b;transform:scaleX(1.0865);">main.trips_detail</span>
<svg class="i" style="left:717.2px;top:21.7px" width="45" height="23.2" viewBox="0 0 45 23.2"><g fill="#2e88c8"><rect x="0" y="13.3" width="15.9" height="2.9"/><rect x="6.5" y="7.2" width="3" height="15.7"/><rect x="21.9" y="0" width="9.1" height="6.8" rx="0.5"/><rect x="21.9" y="9.9" width="9.1" height="12.1" rx="0.5"/><rect x="34.4" y="0" width="9.6" height="22" rx="0.5"/></g></svg>
<span class="t" style="left:959.37px;top:20.59px;font-size:27.3px;color:#5b5b5b;transform:scaleX(0.93);">2</span>
<span class="t" style="left:1151.72px;top:20.59px;font-size:27.3px;color:#5b5b5b;transform:scaleX(0.9384);">Nov 22, 2021</span>
<span class="t" style="left:1519.3px;top:20.59px;font-size:27.3px;color:#5b5b5b;transform:scaleX(0.9492);">16 days ago</span>
<span class="t" style="left:1976.8px;top:20.59px;font-size:27.3px;color:#5b5b5b;transform:scaleX(0.9563);">vizapps_admin</span>
<span class="t" style="left:2401.57px;top:20.59px;font-size:27.3px;color:#2e88c8;transform:scaleX(0.93);">0</span>
<svg class="i" style="left:2690.9px;top:23px" width="20.4" height="22.8" viewBox="0 0 20.4 22.8"><g fill="none" stroke="#2e88c8" stroke-width="2"><path d="M0 4.9h20.4"/><path d="M5.8 4.4c.300-2.3 1.2-3.4 2.7-3.4h3.4c1.5 0 2.4 1.1 2.7 3.4"/><path d="M2.9 5.2v14.1c0 1.5 1 2.5 2.5 2.5h9.6c1.5 0 2.5-1 2.5-2.5V5.2"/><path d="M6.3 8.4v9.8M10.2 8.4v9.8M14.1 8.4v9.8" stroke-width="1.9"/></g></svg>
</div>
</div>
<div class="abs" style="left:3313px;top:436px;width:19px;height:1109.5px;background:#cccccc;border:1px solid #b6b6b6;border-left-width:2px;border-top-width:2px;border-bottom:none;box-sizing:border-box"></div>
</section>
</main>
<nav class="navbar">
<div class="abs" style="left:0;top:0;width:3366px;height:95.5px;background:#1e242b"></div>
<a class="brand">
<span class="t" style="left:55.32px;top:11.72px;font-size:33.4px;font-weight:700;color:#fff;letter-spacing:0.4px;transform:scaleX(0.9838);">CLOUDERA</span>
<div class="abs" style="left:175px;top:21px;width:6.5px;height:5px;background:#1e242b"></div><div class="abs" style="left:175px;top:30px;width:6.5px;height:6px;background:#1e242b"></div>
<span class="t" style="left:55.18px;top:50.28px;font-size:26.6px;color:#f4f4f4;transform:scaleX(1.1098);">Data Visualization</span>
</a>
<span class="t" style="left:497.43px;top:34.62px;font-size:26.2px;color:#c6c9cc;letter-spacing:2.2px;transform:scaleX(0.8864);">HOME</span>
<span class="t" style="left:641.5px;top:34.62px;font-size:26.2px;color:#c6c9cc;letter-spacing:2.2px;transform:scaleX(0.8609);">VISUALS</span>
<div class="abs" style="left:784px;top:96px;width:131.8px;height:5px;background:#3a9ad9"></div>
<div class="abs hl" style="left:778.25px;top:-0.75px;width:139.5px;height:100.75px"></div>
<span class="t" style="left:816.02px;top:34.62px;font-size:26.2px;color:#fff;letter-spacing:2.2px;transform:scaleX(0.8891);">DATA</span>
<div class="abs search" style="left:953.25px;top:17.3px;width:674.75px;height:55.7px"></div>
<svg class="i" style="left:965.2px;top:34.2px" width="24.5" height="24.5" viewBox="0 0 24.5 24.5"><circle cx="10.2" cy="10.2" r="8.1" fill="none" stroke="#b9bdc0" stroke-width="4"/><path d="M16.3 16.3l5.6 5.6" stroke="#b9bdc0" stroke-width="4.6" stroke-linecap="round"/></svg>
<span class="t" style="left:1001.5px;top:32.62px;font-size:24.9px;color:#a6aaad;transform:scaleX(0.8821);">find titles, viz types, datasets, authors...</span>
<svg class="i" style="left:1589.2px;top:32.6px" width="26" height="26" viewBox="0 0 26 26"><circle cx="13" cy="13" r="13" fill="#dedede"/><path d="M8.3 8.3l9.4 9.4M17.7 8.3l-9.4 9.4" stroke="#262c33" stroke-width="4"/></svg>
<svg class="i" style="left:2857.2px;top:36.7px" width="21.9" height="21.9" viewBox="0 0 22.2 22.2"><g transform="translate(11.1 11.1)" fill="#c6c9cc"><circle r="8.1"/><rect x="-2.7" y="-11.1" width="5.4" height="6" rx="0.8" transform="rotate(0)"/><rect x="-2.7" y="-11.1" width="5.4" height="6" rx="0.8" transform="rotate(45)"/><rect x="-2.7" y="-11.1" width="5.4" height="6" rx="0.8" transform="rotate(90)"/><rect x="-2.7" y="-11.1" width="5.4" height="6" rx="0.8" transform="rotate(135)"/><rect x="-2.7" y="-11.1" width="5.4" height="6" rx="0.8" transform="rotate(180)"/><rect x="-2.7" y="-11.1" width="5.4" height="6" rx="0.8" transform="rotate(225)"/><rect x="-2.7" y="-11.1" width="5.4" height="6" rx="0.8" transform="rotate(270)"/><rect x="-2.7" y="-11.1" width="5.4" height="6" rx="0.8" transform="rotate(315)"/></g><circle cx="11.1" cy="11.1" r="3.6" fill="#1e242b"/></svg>
<svg class="i" style="left:2892px;top:46.8px" width="15.2" height="8.3" viewBox="0 0 15.2 8.3"><path d="M0 0h15.2 l-7.6 8.3 z" fill="#c6c9cc"/></svg>
<div class="abs" style="left:2974.7px;top:36.9px;width:21.4px;height:21.4px;border-radius:50%;background:#c6c9cc"></div>
<span class="t" style="left:2979.9px;top:37.52px;font-size:21px;font-weight:700;color:#1e242b;transform:scaleX(0.9333);-webkit-text-stroke:0.4px #1e242b;">?</span>
<svg class="i" style="left:3008.6px;top:46.8px" width="15.2" height="8.3" viewBox="0 0 15.2 8.3"><path d="M0 0h15.2 l-7.6 8.3 z" fill="#c6c9cc"/></svg>
<svg class="i" style="left:3090.9px;top:34.9px" width="33" height="25.2" viewBox="0 0 33 25.2"><g fill="#c6c9cc"><circle cx="9.3" cy="9.6" r="5.7"/><path d="M0 21.2v-3.3c0-2.6 1.7-4.6 4-4.9 1.4 1.3 3.4 2 5.3 2s3.9-.700 5.3-2c2.300.3 3.6 2.3 3.6 4.9v3.3c0 2.1-1.3 3.9-3.3 3.9H3.3C1.3 25.1 0 23.3 0 21.2z" transform="translate(0 0)"/></g><g stroke="#c6c9cc" stroke-width="3.1" stroke-linecap="butt"><path d="M26.5 0.2v13.3"/><path d="M20.8 3.5l11.4 6.7"/><path d="M32.2 3.5l-11.4 6.7"/></g></svg>
<span class="t" style="left:3133.6px;top:35.05px;font-size:26.4px;color:#c6c9cc;letter-spacing:1.8px;transform:scaleX(0.9237);">vizapps_admin</span>
<svg class="i" style="left:3321px;top:44.7px" width="15" height="8.2" viewBox="0 0 15 8.2"><path d="M0 0h15 l-7.5 8.2 z" fill="#c6c9cc"/></svg>
</nav>
</div>
</body>
</html>
